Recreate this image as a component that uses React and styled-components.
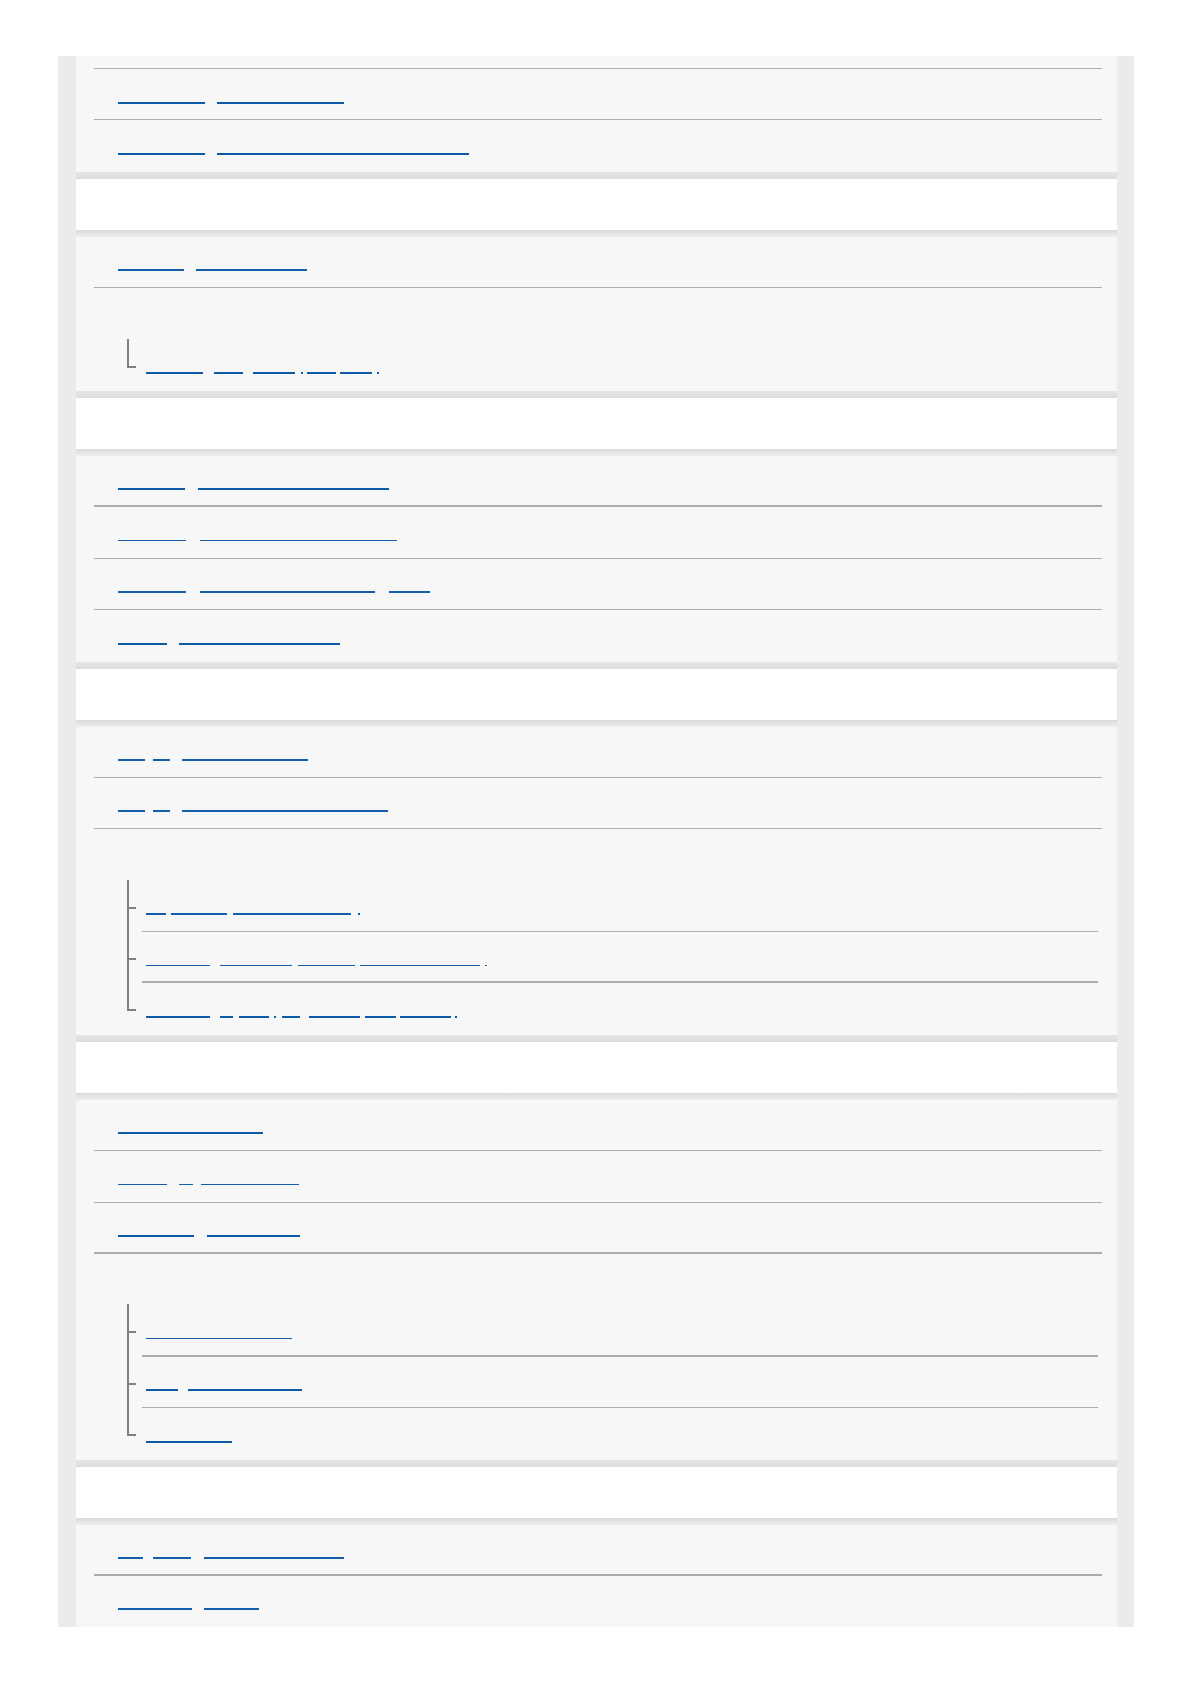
import React from 'react';
import styled, { createGlobalStyle } from 'styled-components';

const ROW_H = 51.4;

const Global = createGlobalStyle`
  html, body { margin: 0; padding: 0; background: #ffffff; }
  body { font-family: "Liberation Sans", Arial, sans-serif; }
`;

const Page = styled.div`
  padding: 56px 0 40px;
`;

const Frame = styled.div`
  box-sizing: border-box;
  margin-left: 58px;
  width: 1076px;
  padding: 0 17px 0 18px;
  background: #ebebeb;
`;

const Panel = styled.section`
  background: #f7f7f7;
  display: flex;
  flex-direction: column;
`;

const Stub = styled.div`
  box-sizing: border-box;
  height: 13px;
  margin: 0 15px 0 18px;
  border-bottom: 1px solid #adadad;
`;

const ruleCss = (r) =>
  r ? `${r}px solid ${r === 2 ? '#ababab' : '#adadad'}` : 'none';

const Row = styled.div`
  box-sizing: border-box;
  height: ${ROW_H}px;
  margin: 0 15px 0 18px;
  padding: 32.5px 0 0 24px;
  border-bottom: ${(p) => ruleCss(p.$rule)};
  display: flex;
  align-items: flex-start;
`;

const Link = styled.a`
  display: block;
  flex: none;
  width: ${(p) => p.$w}px;
  margin-left: ${(p) => p.$ml}px;
  height: ${(p) => (p.$t === 2 ? 2 : 1.5)}px;
  background: ${(p) => (p.$t === 2 ? '#0d5aa7' : '#135fae')};
`;

const Heading = styled.div`
  display: flex;
  flex-direction: column;
`;

const ShadeTop = styled.div`
  height: 7px;
  background: linear-gradient(#e6e6e6, #dcdcdc);
`;

const ShadeBottom = styled.div`
  height: 7px;
  background: linear-gradient(#dadada, #eeeeee);
`;

const HeadBand = styled.div`
  height: 51px;
  background: #ffffff;
`;

const Tree = styled.ul`
  list-style: none;
  margin: 0 19px 0 51px;
  padding: 0;
  position: relative;
  &::before {
    content: '';
    position: absolute;
    left: 0;
    top: -1px;
    bottom: ${ROW_H - 28}px;
    width: 2px;
    background: #808080;
  }
`;

const TreeItem = styled.li`
  position: relative;
  box-sizing: border-box;
  height: ${ROW_H}px;
  margin-left: 15px;
  padding: 32.5px 0 0 4px;
  display: flex;
  align-items: flex-start;
  border-bottom: ${(p) => ruleCss(p.$rule)};
  &::before {
    content: '';
    position: absolute;
    left: -15px;
    top: 26px;
    width: 9px;
    height: 2px;
    background: #808080;
  }
`;

function Segs({ segs, base, t }) {
  let prev = base;
  return segs.map(([a, b], i) => {
    const ml = a - prev;
    prev = b;
    return <Link key={i} href="#" $w={b - a} $ml={ml} $t={t} />;
  });
}

const panels = [
  {
    stub: true,
    rows: [
      { t: 2, rule: 1, segs: [[118, 205], [217, 344]] },
      { t: 2, segs: [[118, 205], [217, 469]] },
    ],
  },
  {
    rows: [{ t: 1, rule: 1, segs: [[118, 184], [196, 307]] }],
    label: true,
    tree: [
      { t: 2, segs: [[146, 203], [214, 243], [253, 295], [301, 303], [307, 336], [340, 372], [377, 379]] },
    ],
  },
  {
    rows: [
      { t: 2, rule: 2, segs: [[118, 185], [198, 389]] },
      { t: 1, rule: 1, segs: [[118, 186], [200, 397]] },
      { t: 1, rule: 1, segs: [[118, 186], [200, 375], [389, 430]] },
      { t: 2, segs: [[118, 167], [179, 340]] },
    ],
  },
  {
    rows: [
      { t: 1, rule: 1, segs: [[118, 145], [153, 170], [182, 308]] },
      { t: 1, rule: 1, segs: [[118, 145], [153, 170], [182, 388]] },
    ],
    label: true,
    tree: [
      { t: 1, rule: 1, segs: [[146, 166], [171, 227], [233, 351], [358, 360]] },
      { t: 1, rule: 2, segs: [[146, 210], [220, 292], [298, 355], [360, 480], [485, 487]] },
      { t: 2, segs: [[146, 210], [220, 233], [239, 269], [274, 276], [282, 300], [309, 360], [365, 396], [400, 451], [455, 457]] },
    ],
  },
  {
    rows: [
      { t: 2, rule: 1, segs: [[118, 263]] },
      { t: 1, rule: 1, segs: [[118, 167], [179, 193], [201, 299]] },
      { t: 2, rule: 2, segs: [[118, 194], [207, 300]] },
    ],
    label: true,
    tree: [
      { t: 1, rule: 2, segs: [[146, 292]] },
      { t: 2, rule: 1, segs: [[146, 178], [188, 302]] },
      { t: 2, segs: [[146, 232]] },
    ],
  },
  {
    rows: [
      { t: 1, rule: 2, segs: [[118, 143], [153, 191], [204, 344]] },
      { t: 1, segs: [[118, 192], [204, 259]] },
    ],
  },
];

export default function App() {
  return (
    <Page>
      <Global />
      <Frame>
        {panels.map((p, i) => (
          <React.Fragment key={i}>
            {i > 0 && (
              <Heading>
                <ShadeTop />
                <HeadBand />
                <ShadeBottom />
              </Heading>
            )}
            <Panel>
              {p.stub && <Stub />}
              {p.rows.map((r, j) => (
                <Row key={j} $rule={r.rule}>
                  <Segs segs={r.segs} base={118} t={r.t} />
                </Row>
              ))}
              {p.label && <Row />}
              {p.tree && (
                <Tree>
                  {p.tree.map((r, j) => (
                    <TreeItem key={j} $rule={r.rule}>
                      <Segs segs={r.segs} base={146} t={r.t} />
                    </TreeItem>
                  ))}
                </Tree>
              )}
            </Panel>
          </React.Fragment>
        ))}
      </Frame>
    </Page>
  );
}
